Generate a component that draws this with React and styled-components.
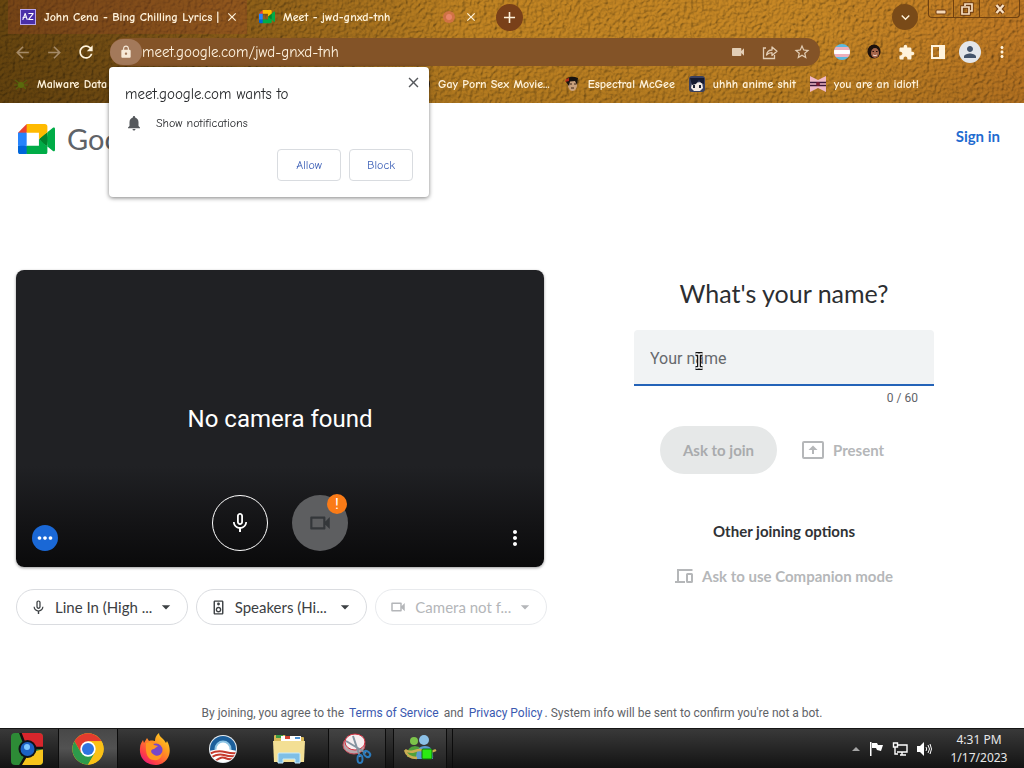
import React from "react";
import styled, { createGlobalStyle } from "styled-components";
import {
  MdAdd,
  MdArrowBack,
  MdArrowDropDown,
  MdArrowForward,
  MdClose,
  MdExpandMore,
  MdExtension,
  MdLock,
  MdMicNone,
  MdMoreHoriz,
  MdMoreVert,
  MdNotifications,
  MdOutlineSpeaker,
  MdOutlineVideocam,
  MdPerson,
  MdRefresh,
  MdStarBorder,
  MdVideocam,
} from "react-icons/md";

const comic = `"Comic Neue", "Comic Sans MS", Lato, sans-serif`;
const product = `"Google Sans", "Product Sans", Lato, sans-serif`;
const body = `Roboto, sans-serif`;

const GlobalStyle = createGlobalStyle`
  *, *::before, *::after { box-sizing: border-box; }
  body { margin: 0; background: #fff; font-family: ${body}; }
  button, input, select { font: inherit; color: inherit; }
  svg { display: block; flex: none; }
`;

const Screen = styled.div`
  display: flex;
  flex-direction: column;
  min-height: 100vh;
`;

/* ---------- browser chrome ---------- */

const BrowserChrome = styled.header`
  position: relative;
  isolation: isolate;
  font-family: ${comic};
  font-size: 12px;
  font-weight: 700;
  color: #fff3dc;
  background:
    linear-gradient(180deg, rgba(60, 36, 0, 0) 30%, rgba(60, 36, 0, 0.12) 100%),
    linear-gradient(90deg, #68460f 0%, #775014 12%, #98661a 28%, #c48623 46%, #cb8a26 80%, #c37b24 100%);
`;

const Leather = styled.svg`
  position: absolute;
  inset: 0;
  width: 100%;
  height: 100%;
  z-index: -1;
  mix-blend-mode: multiply;
`;

const TabStrip = styled.div`
  display: flex;
  align-items: center;
  height: 34px;
  padding-left: 8px;
`;

const Tab = styled.div`
  display: flex;
  align-items: center;
  gap: 8px;
  width: 239px;
  height: 34px;
  padding: 0 8px 0 12px;
  background: ${(p) => (p.$active ? "transparent" : "rgba(158, 70, 44, 0.28)")};
`;

const TabTitle = styled.span`
  flex: 1;
  min-width: 0;
  white-space: nowrap;
`;

const IconButton = styled.button`
  display: flex;
  align-items: center;
  justify-content: center;
  flex: none;
  width: ${(p) => p.$size || 32}px;
  height: ${(p) => p.$size || 32}px;
  padding: 0;
  border: 0;
  border-radius: 50%;
  color: ${(p) => p.$color || "inherit"};
  background: ${(p) => p.$fill || "transparent"};
`;

const NewTab = styled(IconButton)`
  margin-left: 10px;
`;

const StripEnd = styled.div`
  display: flex;
  align-items: center;
  gap: 10px;
  height: 100%;
  margin-left: auto;
  padding-right: 4px;
`;

const WindowControls = styled.div`
  display: flex;
  align-self: flex-start;
  height: 18px;
  border: 1px solid #70410f;
  border-top: 0;
  border-radius: 0 0 4px 4px;
`;

const WindowButton = styled.button`
  display: flex;
  align-items: center;
  justify-content: center;
  width: ${(p) => p.$width}px;
  padding: 0;
  border: 0;
  border-left: ${(p) => (p.$first ? "0" : "1px solid #70410f")};
  background: transparent;
`;

const Toolbar = styled.div`
  display: flex;
  align-items: center;
  height: 36px;
  padding: 0 6px;
`;

const Omnibox = styled.div`
  display: flex;
  align-items: center;
  flex: 1;
  min-width: 0;
  height: 28px;
  margin: 0 6px 0 8px;
  padding-right: 2px;
  border-radius: 14px;
  background: #835327;
  color: #e2cdb4;
`;

const SiteChip = styled.button`
  display: flex;
  align-items: center;
  justify-content: center;
  width: 32px;
  height: 26px;
  padding: 0;
  border: 0;
  border-radius: 13px;
  color: #f7ead8;
  background: #a3795a;
`;

const Address = styled.input`
  flex: 1;
  min-width: 0;
  padding: 0;
  border: 0;
  outline: 0;
  background: transparent;
  color: #fff3e0;
  font-size: 15px;
  font-weight: 500;
`;

const Avatar = styled.span`
  display: flex;
  align-items: center;
  justify-content: center;
  width: 22px;
  height: 22px;
  border-radius: 50%;
  background: #e3e6ea;
  color: #44546b;
`;

const Bookmarks = styled.nav`
  display: flex;
  gap: 14px;
  height: 33px;
  padding: 0 13px 5px;
`;

const Bookmark = styled.a`
  display: flex;
  align-items: center;
  gap: 8px;
  flex: none;
  width: ${(p) => (p.$width ? `${p.$width}px` : "auto")};
  color: inherit;
  text-decoration: none;
  white-space: nowrap;
`;

/* ---------- permission prompt ---------- */

const Prompt = styled.section`
  position: absolute;
  top: 67px;
  left: 109px;
  z-index: 2;
  width: 320px;
  padding: 16px;
  border-radius: 4px;
  background: #fff;
  color: #26282b;
  font-weight: 400;
  box-shadow: 0 1px 4px rgba(0, 0, 0, 0.5);
`;

const PromptHead = styled.div`
  display: flex;
  justify-content: space-between;
  height: 28px;
`;

const PromptTitle = styled.h2`
  margin: 0;
  font-size: 15px;
  font-weight: 400;
  line-height: 22px;
`;

const PromptClose = styled(IconButton)`
  margin: -11px -10px 0 0;
`;

const PromptLine = styled.p`
  display: flex;
  align-items: center;
  gap: 13px;
  height: 24px;
  margin: 0 0 14px;
`;

const PromptActions = styled.div`
  display: flex;
  justify-content: flex-end;
  gap: 8px;
`;

const PromptButton = styled.button`
  width: 64px;
  height: 32px;
  padding: 0;
  border: 1px solid #d9dce0;
  border-radius: 4px;
  background: #fff;
  color: #3f62b8;
`;

/* ---------- meeting page ---------- */

const Page = styled.main`
  display: flex;
  flex-direction: column;
  flex: 1;
`;

const PageHeader = styled.div`
  display: flex;
  align-items: center;
  justify-content: space-between;
  height: 72px;
  padding: 0 24px 0 18px;
`;

const Brand = styled.a`
  display: flex;
  align-items: center;
  gap: 12px;
  color: #5f6368;
  font-family: ${product};
  font-size: 29px;
  line-height: 32px;
  text-decoration: none;
`;

const SignIn = styled.a`
  padding-bottom: 6px;
  color: #1f6bd0;
  font-family: ${product};
  font-size: 15px;
  font-weight: 700;
  text-decoration: none;
`;

const Lobby = styled.div`
  display: grid;
  grid-template-columns: 531fr 477fr;
  margin-top: 95px;
  padding-left: 16px;
`;

const Preview = styled.div`
  display: grid;
  aspect-ratio: 16 / 9;
  margin-right: 3px;
  border-radius: 8px;
  color: #fff;
  background: linear-gradient(#202124 0%, #202124 66%, #131315 86%, #0a0a0b 100%);
  box-shadow: 0 1px 3px rgba(0, 0, 0, 0.4);
`;

const PreviewText = styled.p`
  grid-area: 1 / 1;
  place-self: center;
  margin: 0;
  font-size: 24px;
`;

const PreviewBar = styled.div`
  grid-area: 1 / 1;
  display: flex;
  align-items: flex-end;
  justify-content: space-between;
  padding: 16px;
`;

const MediaButtons = styled.div`
  display: flex;
  gap: 24px;
`;

const MediaButton = styled.button`
  position: relative;
  display: flex;
  align-items: center;
  justify-content: center;
  width: 56px;
  height: 56px;
  padding: 0;
  border: ${(p) => (p.$off ? "0" : "1px solid #fff")};
  border-radius: 50%;
  color: ${(p) => (p.$off ? "#34373a" : "#fff")};
  background: ${(p) => (p.$off ? "#5d5e60" : "transparent")};
`;

const Warning = styled.span`
  position: absolute;
  top: -1px;
  right: 1px;
  width: 20px;
  height: 20px;
  border-radius: 50%;
  background: #fa7b17;
  color: #fff;
  font-size: 15px;
  line-height: 20px;
  text-align: center;
`;

const Devices = styled.div`
  display: grid;
  grid-template-columns: repeat(3, 1fr);
  gap: 8px;
  margin-top: 22px;
`;

const Device = styled.label`
  display: flex;
  align-items: center;
  height: 36px;
  padding: 0 11px 0 13px;
  border: 1px solid ${(p) => (p.$off ? "#e8eaed" : "#dadce0")};
  border-radius: 18px;
  color: ${(p) => (p.$off ? "#b4b6b9" : "#3c4043")};
`;

const DeviceSelect = styled.select`
  flex: 1;
  min-width: 0;
  margin-left: 8px;
  padding: 0 0 1px;
  border: 0;
  outline: 0;
  appearance: none;
  background: transparent;
  font-family: ${product};
  font-size: 15px;
  opacity: 1;
`;

const Join = styled.form`
  display: flex;
  flex-direction: column;
  align-items: center;
  padding: 7px 3px 0 0;
  font-family: ${product};
`;

const Question = styled.h1`
  margin: 0 0 21px;
  color: #2c2e31;
  font-size: 25px;
  font-weight: 400;
  line-height: 32px;
`;

const NameField = styled.div`
  position: relative;
  width: 300px;
  font-family: ${body};
`;

const NameInput = styled.input`
  display: block;
  width: 100%;
  height: 56px;
  padding: 2px 16px 0;
  border: 0;
  border-bottom: 2px solid #2463b8;
  border-radius: 4px 4px 0 0;
  outline: 0;
  background: #f1f3f4;
  font-size: 16px;
  &::placeholder { color: #66696d; opacity: 1; }
`;

const Counter = styled.p`
  margin: 4px 16px 0 0;
  color: #5f6368;
  font-size: 12px;
  line-height: 16px;
  text-align: right;
`;

const Caret = styled.svg`
  position: absolute;
  top: 22px;
  left: 60px;
`;

const JoinActions = styled.div`
  display: flex;
  align-items: center;
  gap: 25px;
  height: 48px;
  margin: 20px 24px 0 0;
`;

const AskButton = styled.button`
  height: 48px;
  padding: 0 23px 1px;
  border: 0;
  border-radius: 24px;
  background: #e6e8e8;
  color: #a9abad;
  font-size: 15px;
  font-weight: 700;
`;

const PlainButton = styled.button`
  display: flex;
  align-items: center;
  gap: 9px;
  padding: 0;
  border: 0;
  background: transparent;
  color: #b5b7b9;
  font-size: 15px;
  font-weight: 700;
`;

const OtherTitle = styled.h2`
  margin: 47px 0 26px;
  color: #303235;
  font-size: 15px;
  font-weight: 700;
  line-height: 20px;
`;

const Legal = styled.p`
  margin: auto 0 0;
  padding-bottom: 7px;
  color: #5f6368;
  font-size: 12px;
  line-height: 16px;
  text-align: center;
`;

const LegalLink = styled.a`
  margin: 0 2px;
  color: #3a59b0;
  text-decoration: none;
`;

/* ---------- taskbar ---------- */

const Taskbar = styled.footer`
  display: flex;
  align-items: center;
  height: 40px;
  border-top: 1px solid #151515;
  background: linear-gradient(#393939, #262626 50%, #131313);
`;

const Task = styled.button`
  display: flex;
  align-items: center;
  justify-content: center;
  flex: none;
  width: ${(p) => p.$width}px;
  height: 100%;
  padding: 0;
  border: solid #0c0c0c;
  border-width: ${(p) => (p.$open ? "0 1px" : "0")};
  background: ${(p) =>
    p.$active ? "linear-gradient(#484848, #525252 50%, #303030)" : p.$open ? "rgba(255,255,255,0.06)" : "transparent"};
`;

const StartTask = styled(Task)`
  padding-right: 4px;
`;

const OpenTasks = styled.div`
  display: flex;
  gap: 7px;
  height: 100%;
  margin-left: 4px;
  padding-right: 5px;
  border-right: 1px solid #0c0c0c;
`;

const Tray = styled.div`
  display: flex;
  align-items: center;
  gap: 8px;
  margin-left: auto;
  padding-right: 14px;
`;

const Clock = styled.time`
  width: 62px;
  margin-left: 8px;
  color: #e8e8e8;
  font-family: "Noto Sans", sans-serif;
  font-size: 12px;
  line-height: 18px;
  text-align: center;
`;

/* ---------- drawings ---------- */

const MeetLogo = ({ width }) => (
  <svg width={width} viewBox="0 0 87.5 72" aria-hidden="true">
    <path fill="#00832d" d="M49.5 36l8.53 9.75 11.47 7.33 2-17.02-2-16.64-11.69 6.44z" />
    <path fill="#0066da" d="M0 51.5V66c0 3.315 2.685 6 6 6h14.5l3-10.96-3-9.54-9.95-3z" />
    <path fill="#e94235" d="M20.5 0L0 20.5l10.55 3 9.95-3 2.95-9.41z" />
    <path fill="#2684fc" d="M20.5 20.5H0v31h20.5z" />
    <path fill="#00ac47" d="M82.6 8.68L69.5 19.42v33.66l13.16 10.79c1.97 1.54 4.85.135 4.85-2.37V11c0-2.535-2.945-3.925-4.91-2.32zM49.5 36v15.5h-29V72h43c3.315 0 6-2.685 6-6V53.08z" />
    <path fill="#ffba00" d="M63.5 0h-43v20.5h29V36l20-16.57V6c0-3.315-2.685-6-6-6z" />
  </svg>
);

const LyricsBadge = styled.span`
  display: flex;
  align-items: center;
  justify-content: center;
  flex: none;
  width: 16px;
  height: 16px;
  border: 1px solid #b9a6ef;
  background: #4a2fa8;
  color: #fff;
  font-size: 10px;
  font-weight: 900;
  line-height: 14px;
`;

const Recording = () => (
  <svg width="14" height="14" viewBox="0 0 14 14" aria-hidden="true">
    <circle cx="7" cy="7" r="6" fill="#d97050" opacity="0.75" />
    <circle cx="7" cy="7" r="3" fill="#e88468" />
  </svg>
);

const Minimize = () => (
  <svg width="12" height="14" viewBox="0 0 12 14" aria-hidden="true">
    <rect x="1" y="8" width="10" height="4" rx="1" fill="#f5d7b4" stroke="#6e3a10" />
  </svg>
);

const Restore = () => (
  <svg width="14" height="14" viewBox="0 0 14 14" fill="none" aria-hidden="true">
    <path d="M5 4V2h7v7h-2M2 5h7v7H2z" stroke="#6e3a10" strokeWidth="3.500" />
    <path d="M5 4V2h7v7h-2M2 5h7v7H2z" stroke="#f8e0c2" strokeWidth="1.700" />
  </svg>
);

const Quit = () => (
  <svg width="14" height="14" viewBox="0 0 14 14" fill="none" aria-hidden="true">
    <path d="M3.500 3l7 8M10.500 3l-7 8" stroke="#6e3a10" strokeWidth="4.500" />
    <path d="M3.500 3l7 8M10.500 3l-7 8" stroke="#f8e0c2" strokeWidth="2.400" />
  </svg>
);

const Share = () => (
  <svg width="16" height="16" viewBox="0 0 16 16" fill="none" stroke="currentColor" strokeWidth="1.3" aria-hidden="true">
    <path d="M4 4H1.500v10.500h11V11" />
    <path d="M4.500 11C5 7.500 7 6 10 6V3l5 4.300-5 4.200V8.700C7.500 8.700 6 9.200 4.500 11z" strokeLinejoin="round" />
  </svg>
);

const PrideFlag = () => (
  <svg width="16" height="16" viewBox="0 0 16 16" aria-hidden="true">
    <clipPath id="flag"><circle cx="8" cy="8" r="8" /></clipPath>
    <g clipPath="url(#flag)">
      <path fill="#5bb9e0" d="M0 0h16v16H0z" />
      <path fill="#eeb0bc" d="M0 3h16v10H0z" />
      <path fill="#fff" d="M0 6h16v4H0z" />
    </g>
  </svg>
);

const Face = () => (
  <svg width="14" height="16" viewBox="0 0 14 16" aria-hidden="true">
    <ellipse cx="7" cy="7.500" rx="6.500" ry="7" fill="#1c100c" />
    <ellipse cx="8" cy="9" rx="4" ry="5" fill="#a5654a" />
    <path d="M5.500 7.500h1.500M9 7.500h1.500" stroke="#28130c" />
    <path d="M6 11q2 1.500 4 0" stroke="#f1d6c8" fill="none" />
  </svg>
);

const SidePanel = () => (
  <svg width="14" height="14" viewBox="0 0 14 14" aria-hidden="true">
    <path fill="currentColor" fillRule="evenodd" d="M0 0h14v14H0zM2 2v10h6V2z" />
  </svg>
);

const Bug = () => (
  <svg width="16" height="16" viewBox="0 0 16 16" aria-hidden="true">
    <path d="M2 4l4 3M14 4l-4 3M1 9h14M3 13l4-4M13 13L9 9" stroke="#55610c" strokeWidth="1.200" />
    <circle cx="8" cy="9" r="3" fill="#5a6a0c" />
  </svg>
);

const FilmIcon = () => (
  <svg width="16" height="16" viewBox="0 0 16 16" aria-hidden="true">
    <circle cx="8" cy="8" r="8" fill="#2b2118" />
  </svg>
);

const McGee = () => (
  <svg width="16" height="16" viewBox="0 0 16 16" aria-hidden="true">
    <path d="M4 5h9v5q-1 5-4.500 5T4 10z" fill="#c9a07c" />
    <path d="M2 3q5-4 12-1l-1 7-2-4-5 .5L5 10 2 6z" fill="#17120f" />
    <path d="M2 3l3-1v3l-4 1z" fill="#b02a18" />
    <path d="M6 8h2M10 8h2M7 12h3" stroke="#3a2418" />
  </svg>
);

const AnimeFace = () => (
  <svg width="16" height="16" viewBox="0 0 16 16" aria-hidden="true">
    <rect width="16" height="16" rx="3" fill="#39405f" />
    <path d="M3 7l10-1 1 6-3 3H5l-3-3z" fill="#f4ece6" />
    <path d="M1 2h14v6l-3-1-2-3-3 4-4 1z" fill="#151a30" />
    <path d="M4 9h2v3H4zM10 9h2v3h-2z" fill="#1d2233" />
  </svg>
);

const Ribbon = () => (
  <svg width="16" height="16" viewBox="0 0 16 16" aria-hidden="true">
    <path d="M0 0l8 4 8-4v16l-8-4-8 4z" fill="#f0b8c6" />
    <path d="M0 6.500h16M0 9.500h16" stroke="#3a1638" strokeWidth="1.500" />
    <circle cx="8" cy="8" r="2" fill="#7b1e36" />
  </svg>
);

const PresentIcon = () => (
  <svg width="22" height="18" viewBox="0 0 22 18" fill="none" stroke="currentColor" strokeWidth="2" aria-hidden="true">
    <rect x="1" y="1" width="20" height="16" rx="1" />
    <path d="M11 13V8" />
    <path d="M11 4.500l4.500 4.500h-9z" fill="currentColor" stroke="none" />
  </svg>
);

const CompanionIcon = () => (
  <svg width="18" height="14" viewBox="0 0 18 14" fill="none" stroke="currentColor" strokeWidth="2" aria-hidden="true">
    <path d="M17.500 1H3v11M0 13h10" />
    <rect x="12" y="5" width="5" height="8" rx="0.500" />
  </svg>
);

const TextCursor = () => (
  <Caret width="10" height="18" viewBox="0 0 10 18" fill="none" aria-hidden="true">
    <path d="M1.500 2h2.500l1 1 1-1h2.500M5 3v12M1.500 16h2.500l1-1 1 1h2.500" stroke="#111" strokeWidth="4" />
    <path d="M1.500 2h2.500l1 1 1-1h2.500M5 3v12M1.500 16h2.500l1-1 1 1h2.500" stroke="#fff" strokeWidth="1.500" />
  </Caret>
);

const SquareChrome = () => (
  <svg width="34" height="34" viewBox="0 0 34 34" aria-hidden="true">
    <clipPath id="sq"><rect x="1" y="1" width="32" height="32" rx="4" /></clipPath>
    <g clipPath="url(#sq)">
      <path fill="#2d8b36" d="M0 0h34v34H0z" />
      <path fill="#d8262c" d="M10 0h24v16H17z" />
      <path fill="#f7c41c" d="M34 17v17H10l8-13z" />
      <path d="M10 0l5 13M34 16H20M10 34l7-12" stroke="#111" strokeWidth="2.500" />
    </g>
    <circle cx="17.500" cy="17" r="9" fill="#101318" />
    <circle cx="17.500" cy="17" r="7" fill="#1c62c4" />
    <circle cx="17" cy="15" r="3" fill="#80c8ff" />
  </svg>
);

const Chrome = () => (
  <svg width="32" height="32" viewBox="0 0 48 48" aria-hidden="true">
    <circle cx="24" cy="24" r="23.500" fill="#fbc116" />
    <path fill="#e33b2e" d="M3.650 12.250A23.500 23.500 0 0 1 44.350 12.250H24L13.800 29.900z" />
    <path fill="#2d9a4b" d="M3.650 12.250A23.500 23.500 0 0 0 24 47.500L34.200 29.900H13.800z" />
    <path fill="#fbc116" d="M24 12.250h20.350A23.500 23.500 0 0 1 24 47.500L34.200 29.900z" />
    <circle cx="24" cy="24" r="11.500" fill="#fff" />
    <circle cx="24" cy="24" r="9" fill="#2f74e0" />
  </svg>
);

const Firefox = () => (
  <svg width="32" height="32" viewBox="0 0 32 32" aria-hidden="true">
    <defs>
      <linearGradient id="fox" x1="1" y1="0" x2="0.200" y2="1">
        <stop offset="0" stopColor="#ffe226" />
        <stop offset="0.400" stopColor="#ff9a1f" />
        <stop offset="0.800" stopColor="#ff3f45" />
        <stop offset="1" stopColor="#e3177f" />
      </linearGradient>
    </defs>
    <path fill="url(#fox)" d="M20 0c0 3 2 4 5 7l2 3 1-2c6 10 2 23-11 24C7 32 0 25 1 15c0-4 2-6 3-8l1 3 3-5 2 3c3-1 5 0 6 0 0-3 1-6 4-8z" />
    <circle cx="17" cy="17" r="6.500" fill="#7847c8" />
    <path fill="#ff981f" d="M7 10c5-2 7 0 8 2l4 1-4 3c-3 0-4 3-1 5 3 3 7 2 9-1 0 5-4 8-8 7-6 0-9-6-8-17z" />
  </svg>
);

const Sunrise = () => (
  <svg width="28" height="28" viewBox="0 0 28 28" aria-hidden="true">
    <clipPath id="sun"><circle cx="14" cy="14" r="13" /></clipPath>
    <circle cx="14" cy="14" r="14" fill="#e8eef3" />
    <g clipPath="url(#sun)">
      <path fill="#1c5f9b" d="M0 0h28v17H0z" />
      <circle cx="14" cy="14" r="8.500" fill="#8cc4e4" />
      <circle cx="14" cy="14" r="6.500" fill="#fff" />
      <path fill="#fff" d="M0 16q14-4 28 0v12H0z" />
      <path d="M0 19q8-4 16-2t12 1M1 23q8-5 14-3t13 1M5 27q7-6 11-4t10 1" stroke="#c63a2d" strokeWidth="2" fill="none" />
    </g>
  </svg>
);

const Explorer = () => (
  <svg width="34" height="30" viewBox="0 0 34 30" aria-hidden="true">
    <path fill="#d7b757" d="M2 2q0-1 1-1h10l1 2h17q1 0 1 1v23H2z" />
    <path fill="#3c9b46" d="M4 1h7v3H4z" />
    <path fill="#fff" d="M9 2h20v5H9z" />
    <path fill="#d74432" d="M13 2h5v3h-5z" />
    <path fill="#4a8fd0" d="M23 3h5v2h-5z" />
    <path fill="#f3df94" d="M1 7h32l-1 21H2z" />
    <path fill="#7fbfe6" stroke="#c9ebfa" d="M6 29V20q0-1 1-1h20q1 0 1 1v9h-5v-4H11v4z" />
  </svg>
);

const Snipping = () => (
  <svg width="32" height="32" viewBox="0 0 32 32" fill="none" aria-hidden="true">
    <ellipse cx="13" cy="12" rx="11" ry="9" fill="#b9a5a9" stroke="#c64a58" />
    <ellipse cx="14" cy="9" rx="10" ry="8" fill="#f6eef0" stroke="#d32b3c" />
    <path d="M5 8l20 12M12 3l7 21" stroke="#8593a0" strokeWidth="2" />
    <ellipse cx="19" cy="26" rx="2.500" ry="4" stroke="#2c7bbd" strokeWidth="2" />
    <ellipse cx="26" cy="21" rx="3.500" ry="2.500" stroke="#2c7bbd" strokeWidth="2" transform="rotate(40 26 21)" />
  </svg>
);

const Messenger = () => (
  <svg width="34" height="28" viewBox="0 0 34 28" aria-hidden="true">
    <circle cx="11" cy="6" r="4" fill="#7cc34a" />
    <path fill="#4fa03a" d="M4 22q0-11 8-11t8 11z" />
    <circle cx="21" cy="5" r="5" fill="#8cc0e6" />
    <path fill="#5b9bd0" d="M13 24q0-13 9-13t8 13z" />
    <path d="M2 15q5 3 10 1t10 0 11-1M2 15q2 8 12 8" stroke="#c9ae52" strokeWidth="2.500" fill="none" />
    <rect x="19" y="14" width="10" height="10" rx="1" fill="#2bea12" stroke="#12700a" />
  </svg>
);

const TrayArrow = () => (
  <svg width="8" height="4" viewBox="0 0 8 4" aria-hidden="true"><path fill="#a5a5a5" d="M4 0l4 4H0z" /></svg>
);

const TrayFlag = () => (
  <svg width="16" height="16" viewBox="0 0 16 16" aria-hidden="true">
    <path fill="#fff" d="M2 1h1.500v14H2zM4 2h5l1 2h5l-2 6-4-1-1-2H4z" />
  </svg>
);

const TrayNetwork = () => (
  <svg width="16" height="16" viewBox="0 0 16 16" fill="none" stroke="#fff" strokeWidth="1.400" aria-hidden="true">
    <path d="M6 4h9v7H5M8 14h6M10 11v3M3 6v7h3" />
    <path d="M1.500 2h4v4h-4z" />
  </svg>
);

const TrayVolume = () => (
  <svg width="16" height="16" viewBox="0 0 16 16" aria-hidden="true">
    <path fill="#fff" d="M1 5h3l4-4v14l-4-4H1z" />
    <path d="M10 6q1.500 2 0 4M12 4q3 4 0 8M14 3q3 5 0 10" stroke="#fff" fill="none" />
  </svg>
);

/* ---------- page ---------- */

export default function App() {
  return (
    <Screen>
      <GlobalStyle />
      <BrowserChrome>
        <Leather aria-hidden="true">
          <filter id="leather" x="0" y="0" width="100%" height="100%">
            <feTurbulence type="fractalNoise" baseFrequency="0.280" numOctaves="2" seed="4" result="grain" />
            <feDiffuseLighting in="grain" surfaceScale="2" lightingColor="#fff">
              <feDistantLight azimuth="225" elevation="60" />
            </feDiffuseLighting>
          </filter>
          <rect width="100%" height="100%" filter="url(#leather)" />
        </Leather>

        <TabStrip>
          <Tab>
            <LyricsBadge>AZ</LyricsBadge>
            <TabTitle>John Cena - Bing Chilling Lyrics |</TabTitle>
            <IconButton $size={14} aria-label="Close tab"><MdClose size={14} /></IconButton>
          </Tab>
          <Tab $active>
            <MeetLogo width={16} />
            <TabTitle>Meet - jwd-gnxd-tnh</TabTitle>
            <Recording />
            <IconButton $size={14} aria-label="Close tab"><MdClose size={14} /></IconButton>
          </Tab>
          <NewTab $size={27} $fill="#794019" aria-label="New tab"><MdAdd size={19} /></NewTab>
          <StripEnd>
            <IconButton $size={26} $fill="#794a18" aria-label="Search tabs"><MdExpandMore size={17} /></IconButton>
            <WindowControls>
              <WindowButton $first $width={24} aria-label="Minimize"><Minimize /></WindowButton>
              <WindowButton $width={26} aria-label="Restore"><Restore /></WindowButton>
              <WindowButton $width={40} aria-label="Close"><Quit /></WindowButton>
            </WindowControls>
          </StripEnd>
        </TabStrip>

        <Toolbar>
          <IconButton $color="#a58a68" aria-label="Back"><MdArrowBack size={19} /></IconButton>
          <IconButton $color="#a58a68" aria-label="Forward"><MdArrowForward size={19} /></IconButton>
          <IconButton aria-label="Reload"><MdRefresh size={20} /></IconButton>
          <Omnibox>
            <SiteChip aria-label="Site information"><MdLock size={14} /></SiteChip>
            <Address aria-label="Address" defaultValue="meet.google.com/jwd-gnxd-tnh" />
            <IconButton aria-label="Camera"><MdVideocam size={16} /></IconButton>
            <IconButton aria-label="Share"><Share /></IconButton>
            <IconButton aria-label="Bookmark this page"><MdStarBorder size={18} /></IconButton>
          </Omnibox>
          <IconButton aria-label="Flag extension"><PrideFlag /></IconButton>
          <IconButton aria-label="Face extension"><Face /></IconButton>
          <IconButton aria-label="Extensions"><MdExtension size={17} /></IconButton>
          <IconButton aria-label="Side panel"><SidePanel /></IconButton>
          <IconButton aria-label="Profile"><Avatar><MdPerson size={18} /></Avatar></IconButton>
          <IconButton aria-label="Menu"><MdMoreVert size={18} /></IconButton>
        </Toolbar>

        <Bookmarks>
          <Bookmark href="#" $width={387}><Bug />Malware Data</Bookmark>
          <Bookmark href="#"><FilmIcon />Gay Porn Sex Movie...</Bookmark>
          <Bookmark href="#"><McGee />Espectral McGee</Bookmark>
          <Bookmark href="#"><AnimeFace />uhhh anime shit</Bookmark>
          <Bookmark href="#"><Ribbon />you are an idiot!</Bookmark>
        </Bookmarks>

        <Prompt aria-label="Permission request">
          <PromptHead>
            <PromptTitle>meet.google.com wants to</PromptTitle>
            <PromptClose $size={20} $color="#55585c" aria-label="Close"><MdClose size={17} /></PromptClose>
          </PromptHead>
          <PromptLine><MdNotifications size={18} color="#55585c" />Show notifications</PromptLine>
          <PromptActions>
            <PromptButton>Allow</PromptButton>
            <PromptButton>Block</PromptButton>
          </PromptActions>
        </Prompt>
      </BrowserChrome>

      <Page>
        <PageHeader>
          <Brand href="#"><MeetLogo width={37} />Google Meet</Brand>
          <SignIn href="#">Sign in</SignIn>
        </PageHeader>

        <Lobby>
          <div>
            <Preview>
              <PreviewText>No camera found</PreviewText>
              <PreviewBar>
                <IconButton $size={26} $fill="#1a68d6" aria-label="Visual effects"><MdMoreHoriz size={22} /></IconButton>
                <MediaButtons>
                  <MediaButton aria-label="Turn off microphone"><MdMicNone size={24} /></MediaButton>
                  <MediaButton $off aria-label="Camera problem">
                    <MdOutlineVideocam size={26} />
                    <Warning>!</Warning>
                  </MediaButton>
                </MediaButtons>
                <IconButton $size={26} aria-label="More options"><MdMoreVert size={24} /></IconButton>
              </PreviewBar>
            </Preview>
            <Devices>
              <Device>
                <MdMicNone size={17} />
                <DeviceSelect aria-label="Microphone"><option>Line In (High ...</option></DeviceSelect>
                <MdArrowDropDown size={20} />
              </Device>
              <Device>
                <MdOutlineSpeaker size={17} />
                <DeviceSelect aria-label="Speaker"><option>Speakers (Hi...</option></DeviceSelect>
                <MdArrowDropDown size={20} />
              </Device>
              <Device $off>
                <MdOutlineVideocam size={18} />
                <DeviceSelect aria-label="Camera" disabled><option>Camera not f...</option></DeviceSelect>
                <MdArrowDropDown size={20} />
              </Device>
            </Devices>
          </div>

          <Join onSubmit={(e) => e.preventDefault()}>
            <Question>What's your name?</Question>
            <NameField>
              <NameInput aria-label="Your name" placeholder="Your name" maxLength={60} />
              <TextCursor />
              <Counter>0 / 60</Counter>
            </NameField>
            <JoinActions>
              <AskButton disabled>Ask to join</AskButton>
              <PlainButton disabled><PresentIcon />Present</PlainButton>
            </JoinActions>
            <OtherTitle>Other joining options</OtherTitle>
            <PlainButton disabled><CompanionIcon />Ask to use Companion mode</PlainButton>
          </Join>
        </Lobby>

        <Legal>
          By joining, you agree to the <LegalLink href="#">Terms of Service</LegalLink> and{" "}
          <LegalLink href="#">Privacy Policy</LegalLink>. System info will be sent to confirm you're not a bot.
        </Legal>
      </Page>

      <Taskbar>
        <StartTask $width={58} aria-label="Start"><SquareChrome /></StartTask>
        <Task $width={60} $open $active aria-label="Chrome"><Chrome /></Task>
        <Task $width={74} aria-label="Firefox"><Firefox /></Task>
        <Task $width={62} aria-label="Campaign"><Sunrise /></Task>
        <Task $width={70} aria-label="File Explorer"><Explorer /></Task>
        <OpenTasks>
          <Task $width={58} $open aria-label="Snipping Tool"><Snipping /></Task>
          <Task $width={54} $open aria-label="Messenger"><Messenger /></Task>
        </OpenTasks>
        <Tray>
          <TrayArrow />
          <TrayFlag />
          <TrayNetwork />
          <TrayVolume />
          <Clock>4:31 PM<br />1/17/2023</Clock>
        </Tray>
      </Taskbar>
    </Screen>
  );
}
